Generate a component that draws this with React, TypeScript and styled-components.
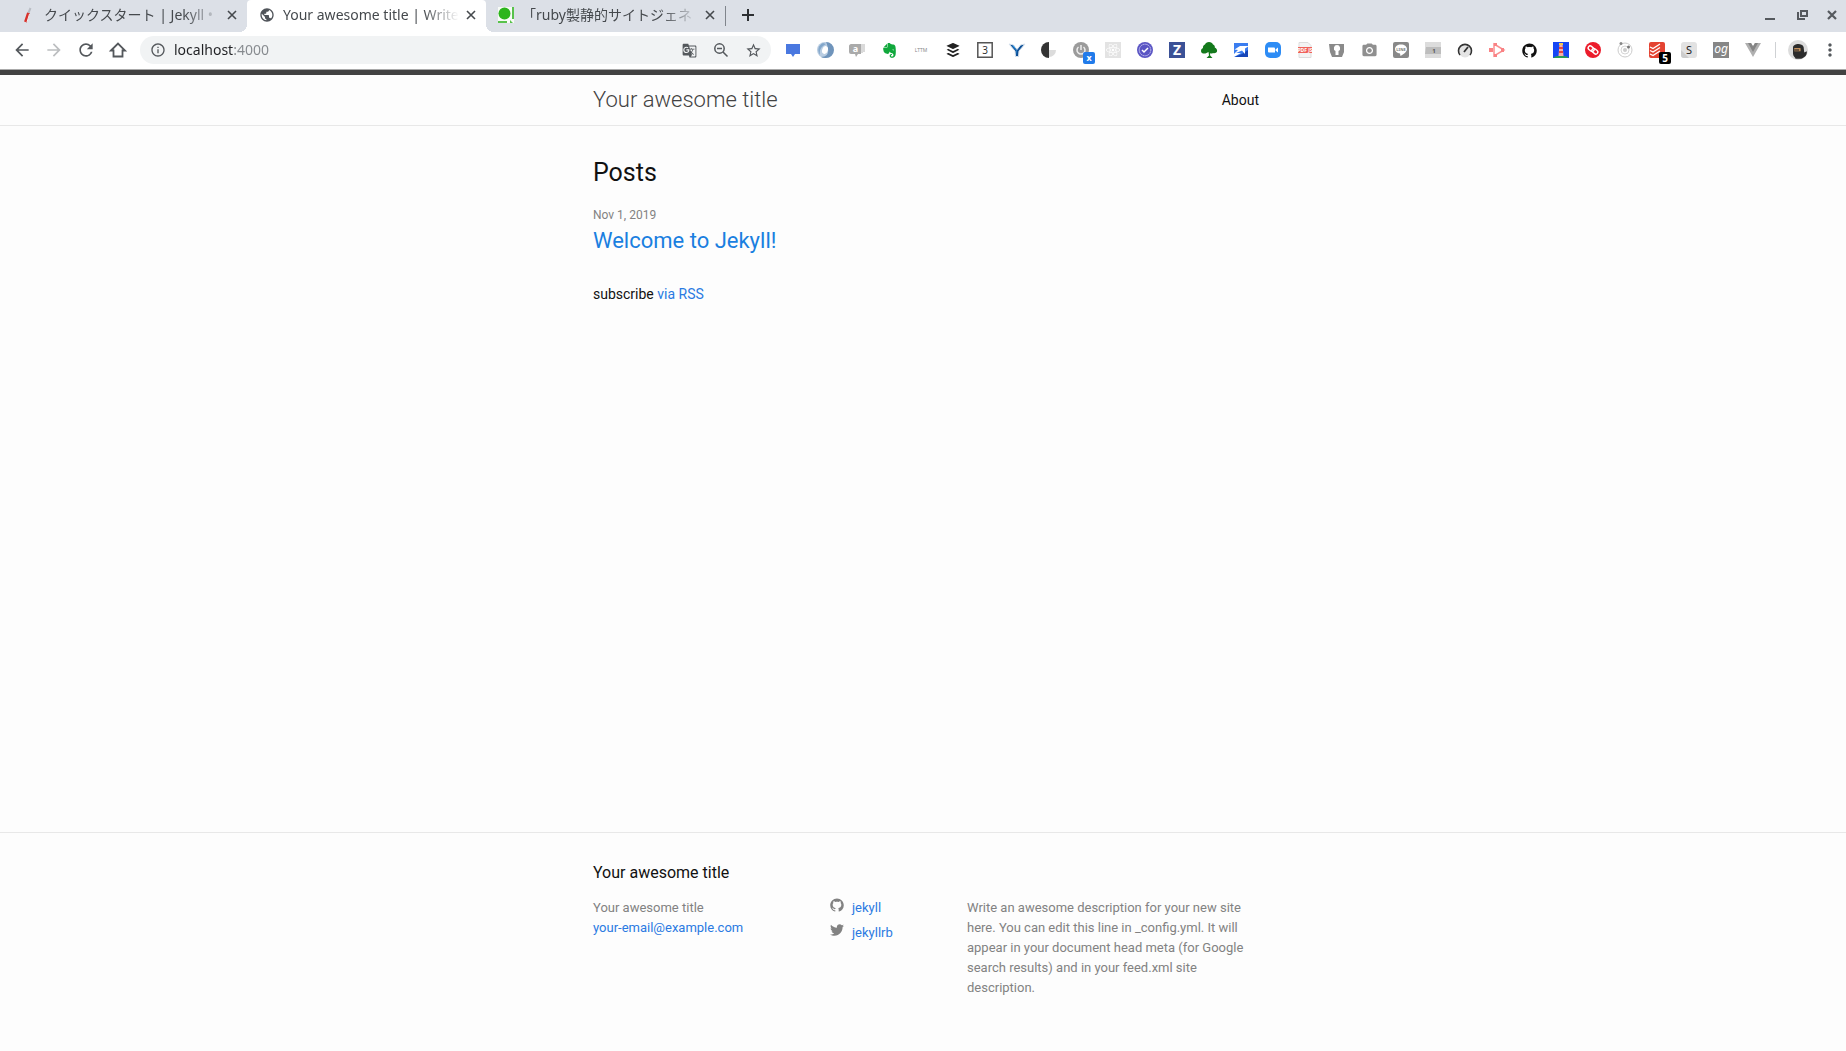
import React from "react";
import styled, { createGlobalStyle, css } from "styled-components";
import { FaBuffer, FaEvernote, FaReact } from "react-icons/fa";
import {
  MdArrowBack,
  MdArrowForward,
  MdCameraAlt,
  MdGTranslate,
  MdInfoOutline,
  MdMoreVert,
  MdPublic,
  MdRefresh,
  MdStarBorder,
} from "react-icons/md";

const GlobalStyle = createGlobalStyle`
  *, *::before, *::after { box-sizing: border-box; }
  body { margin: 0; background: #fdfdfd; }
  button { border: 0; padding: 0; background: none; color: inherit; font: inherit; }
  h1, h2, h3, p, ul { margin: 0; padding: 0; font-weight: 400; }
  ul { list-style: none; }
  svg { display: block; flex: none; }
`;

const uiFont = `"Noto Sans", "Noto Sans CJK JP", sans-serif`;

const Window = styled.div`
  display: flex;
  flex-direction: column;
  min-height: 100vh;
`;

/* ---------- tab strip ---------- */

const TabStrip = styled.div`
  display: flex;
  align-items: center;
  height: 32px;
  padding-left: 8px;
  background: #dce0e7;
  font-family: ${uiFont};
  color: #45494d;
`;

const Tab = styled.div<{ $active?: boolean }>`
  position: relative;
  display: flex;
  flex: 0 1 239px;
  align-items: center;
  min-width: 0;
  height: 32px;
  padding: 0 7px 2px 12px;
  ${(p) =>
    p.$active &&
    css`
      background: #fff;
      border-radius: 4px 4px 0 0;
      &::before,
      &::after {
        content: "";
        position: absolute;
        bottom: 0;
        width: 8px;
        height: 8px;
      }
      &::before {
        left: -8px;
        background: radial-gradient(circle at 0 0, transparent 8px, #fff 8px);
      }
      &::after {
        right: -8px;
        background: radial-gradient(circle at 100% 0, transparent 8px, #fff 8px);
      }
    `}
`;

const TabTitle = styled.button`
  flex: 1;
  min-width: 0;
  margin: 0 4px 0 8px;
  overflow: hidden;
  white-space: nowrap;
  text-align: left;
  font-size: 14px;
  line-height: 20px;
  mask-image: linear-gradient(to left, transparent 0, #000 36px);
`;

const CloseButton = styled.button`
  display: grid;
  place-items: center;
  width: 16px;
  height: 16px;
`;

const TabDivider = styled.span`
  width: 1px;
  height: 20px;
  background: #80858c;
`;

const NewTabButton = styled(CloseButton)`
  width: 28px;
  height: 28px;
  margin: 0 auto 2px 8px;
  color: #2d3033;
`;

const WindowButton = styled(CloseButton)`
  width: 32px;
  height: 30px;
  margin-bottom: 2px;
  color: #55595e;
  &:last-child {
    width: 28px;
  }
`;

/* ---------- toolbar ---------- */

const Toolbar = styled.div`
  display: flex;
  align-items: center;
  height: 38px;
  padding: 0 0 1px 6px;
  border-bottom: 1px solid #aaa;
  background: #fff;
  font-family: ${uiFont};
`;

const ToolButton = styled.button<{ $dim?: boolean }>`
  display: grid;
  flex: none;
  place-items: center;
  width: 32px;
  height: 28px;
  color: ${(p) => (p.$dim ? "#bcbec0" : "#54585c")};
`;

const AddressBar = styled.div`
  display: flex;
  flex: 1;
  align-items: center;
  min-width: 0;
  height: 28px;
  margin: 0 6px;
  padding: 0 2px 0 10px;
  border-radius: 14px;
  background: #f1f3f4;
  color: #54585c;
`;

const AddressInput = styled.input`
  flex: 1;
  min-width: 0;
  margin-left: 8px;
  padding: 0;
  border: 0;
  outline: 0;
  background: linear-gradient(to right, #202124 59px, #85898d 59px);
  background-clip: text;
  -webkit-text-fill-color: transparent;
  font-family: ${uiFont};
  font-size: 14px;
  line-height: 20px;
`;

const Extensions = styled.div`
  display: flex;
`;

const ToolDivider = styled.span`
  width: 1px;
  height: 16px;
  margin: 0 6px;
  background: #cfd1d4;
`;

/* ---------- web page ---------- */

const Page = styled.div`
  display: flex;
  flex: 1;
  flex-direction: column;
  border-top: 5px solid #424242;
  background: #fdfdfd;
  color: #111;
  font-family: Roboto, sans-serif;
  font-size: 14px;
  line-height: 22px;
`;

const Wrapper = styled.div`
  max-width: 728px;
  margin: 0 auto;
  padding: 0 28px 0 34px;
`;

const SiteHeader = styled.header`
  border-bottom: 1px solid #e8e8e8;
`;

const HeaderRow = styled(Wrapper)`
  display: flex;
  align-items: center;
  justify-content: space-between;
  height: 50px;
`;

const SiteTitle = styled.a`
  color: #424242;
  font-size: 22px;
  font-weight: 300;
  text-decoration: none;
`;

const NavLink = styled.a`
  color: #111;
  text-decoration: none;
`;

const Content = styled.main`
  flex: 1;
  padding: 28px 0;
`;

const ListHeading = styled.h2`
  margin-bottom: 13px;
  font-size: 25px;
  line-height: 38px;
`;

const PostItem = styled.li`
  margin-bottom: 26px;
`;

const PostDate = styled.time`
  display: block;
  color: #828282;
  font-size: 12px;
  line-height: 20px;
`;

const PostTitle = styled.h3`
  font-size: 22px;
  line-height: 32px;
`;

const Link = styled.a`
  color: #2a7ae2;
  text-decoration: none;
`;

const PostLink = styled(Link)`
  color: #1a7fe0;
`;

const SiteFooter = styled.footer`
  padding: 28px 0 53px;
  border-top: 1px solid #e8e8e8;
`;

const FooterHeading = styled.h2`
  margin-bottom: 13px;
  font-size: 16px;
  line-height: 24px;
`;

const FooterColumns = styled.div`
  display: grid;
  grid-template-columns: 237fr 137fr 292fr;
  color: #828282;
  font-size: 13px;
  line-height: 20px;
`;

const SocialLink = styled(Link)`
  display: flex;
  gap: 8px;
  height: 25px;
  svg {
    color: #828282;
  }
`;

/* ---------- icons ---------- */

const Icon = ({ size = 16, children }: { size?: number; children: React.ReactNode }) => (
  <svg width={size} height={size} viewBox="0 0 16 16" fill="none" overflow="visible" aria-hidden="true">
    {children}
  </svg>
);

const Cross = ({ size = 16, weight = 2 }: { size?: number; weight?: number }) => (
  <Icon size={size}>
    <path d="M4 4l8 8M12 4l-8 8" stroke="currentColor" strokeWidth={weight} />
  </Icon>
);

const glyph = { fontFamily: "Noto Sans, sans-serif", textAnchor: "middle" as const };

const extensions: { name: string; icon: React.ReactNode }[] = [
  {
    name: "Comments",
    icon: <Icon><path d="M1 2h14v10h-5l-2 3-2-3H1z" fill="#4a78e0" /></Icon>,
  },
  {
    name: "Swirl",
    icon: (
      <Icon>
        <circle cx="8" cy="8" r="8" fill="#b9cde2" />
        <path d="M9 0a8 8 0 0 1 0 16 8 8 0 0 1-5-1c5 0 8-3 7-8-.4-3-1-5-2-7z" fill="#6f94bb" />
        <path d="M6 1C1 3 0 9 3 13c-.5-4 0-8 6-11z" fill="#83a7cb" />
        <ellipse cx="8" cy="8" rx="2.8" ry="4" fill="#fff" transform="rotate(20 8 8)" />
      </Icon>
    ),
  },
  {
    name: "Alias",
    icon: (
      <Icon>
        <path d="M2 2h10v10H9l-2 3-1-3H2a2 2 0 0 1-2-2V4c0-1 1-2 2-2z" fill="#aaa" />
        <path d="M13 2v9M15 2v8" stroke="#b5b5b5" />
        <text x="6.5" y="10" fontSize="9" fontWeight="700" fill="#fff" {...glyph}>a</text>
      </Icon>
    ),
  },
  { name: "Evernote", icon: <FaEvernote size={17} color="#10a83c" /> },
  {
    name: "LTTM",
    icon: <Icon><text x="8" y="9.5" fontSize="5" fill="#888" {...glyph}>LTTM</text></Icon>,
  },
  { name: "Buffer", icon: <FaBuffer size={16} color="#222" /> },
  {
    name: "Counter",
    icon: (
      <Icon>
        <path d="M.8.8h14.400v14.400H.8z" stroke="#555" strokeWidth="1.5" />
        <text x="8" y="11.5" fontSize="10" fill="#333" {...glyph}>3</text>
      </Icon>
    ),
  },
  {
    name: "Y",
    icon: (
      <Icon>
        <path d="M0 2l6 7 .5 5.500h3L10 9l6-7-4.500 1L8 7.500 4.500 3z" fill="#0d4f96" stroke="#d6e2ee" />
        <path d="M3 3.500l4 4.500.7 5V8.500L5 4z" fill="#2f9be8" />
      </Icon>
    ),
  },
  {
    name: "Contrast",
    icon: (
      <Icon>
        <circle cx="8" cy="8" r="7" fill="#dcdcdc" />
        <path d="M8 8h8a8 8 0 0 0-8-8z" fill="#fff" />
        <path d="M8 0a8 8 0 0 0 0 16z" fill="#333" />
      </Icon>
    ),
  },
  {
    name: "Power",
    icon: (
      <Icon>
        <circle cx="8" cy="8" r="8" fill="#9b9b9b" />
        <path d="M5.500 5a4 4 0 1 0 5 0M8 3v5" stroke="#eee" strokeWidth="1.5" />
        <rect x="10" y="10" width="12" height="12" rx="2" fill="#217bea" />
        <text x="16" y="19" fontSize="9" fontWeight="700" fill="#fff" {...glyph}>x</text>
      </Icon>
    ),
  },
  {
    name: "React",
    icon: (
      <Icon>
        <path d="M0 0h16v16H0z" fill="#e3e3e3" />
        <FaReact x="1" y="1" size={14} color="#fff" />
      </Icon>
    ),
  },
  {
    name: "Check",
    icon: (
      <Icon>
        <circle cx="8" cy="8" r="8" fill="#5a55c4" />
        <circle cx="8" cy="8" r="5.8" stroke="#c9c6f2" strokeDasharray="1.5 .5" />
        <path d="M5 8l2 2 4-4" stroke="#fff" strokeWidth="1.5" />
      </Icon>
    ),
  },
  {
    name: "Z",
    icon: (
      <Icon>
        <path d="M0 0h16v16H0z" fill="#3b5196" />
        <text x="8" y="13" fontSize="14" fontWeight="700" fill="#fff" {...glyph}>Z</text>
      </Icon>
    ),
  },
  {
    name: "Tree",
    icon: (
      <Icon>
        <path
          d="M8 0c2 0 3.500 1 4 2.500 1.500.5 2 1.500 1.800 3C15.500 6 16.500 8 16 9.500c-.5 1.500-2.500 2-4 1.500-1 .8-2.500.6-3 .2l.2 2.300L11.500 16h-6L8 13.500 7.500 10 5.500 11C4 12 0 12 0 9c0-1.800 1-2.500 2-3-.3-1.500.5-3 2-3.500C4.500 1 6 0 8 0z"
          fill="#14791c"
        />
      </Icon>
    ),
  },
  {
    name: "Blue arrow",
    icon: (
      <Icon>
        <path d="M1 1h14v14H1z" fill="#3a7df0" />
        <path d="M15 8v7H1l8-3z" fill="#1746b8" />
        <path d="M1.500 7.500L7 4h9l-4 2.500V12L9 8.500 3 11h5L1 15V12l4-4z" fill="#fff" />
      </Icon>
    ),
  },
  {
    name: "Zoom",
    icon: (
      <Icon>
        <rect width="16" height="16" rx="5" fill="#2d8cf5" />
        <path d="M3 5.500h6a1 1 0 0 1 1 1v4H4a1 1 0 0 1-1-1zM10.500 7.500l2.500-2v5l-2.500-2z" fill="#fff" />
      </Icon>
    ),
  },
  {
    name: "PDF JS",
    icon: (
      <Icon>
        <path d="M2 .5h9l3 3v12H2z" fill="#f4f4f4" stroke="#ddd" />
        <path d="M1 5h14v6H1z" fill="#f0625a" />
        <text x="8" y="10" fontSize="5" fontWeight="700" fill="#fff" {...glyph}>PDF JS</text>
      </Icon>
    ),
  },
  {
    name: "Keyhole",
    icon: (
      <Icon>
        <path d="M0 2h15v8l-2 5H3l-2-5z" fill="#8a8a8a" />
        <path d="M8 3a3.200 3.200 0 0 0-1.500 6v4h3V9A3.200 3.200 0 0 0 8 3z" fill="#fff" />
      </Icon>
    ),
  },
  { name: "Camera", icon: <MdCameraAlt size={17} color="#8f8f8f" /> },
  {
    name: "LINE",
    icon: (
      <Icon>
        <rect width="16" height="16" rx="2" fill="#888" />
        <path d="M8 2.500c-3.500 0-6 2-6 4.600 0 2.400 2 4 5 4.400l.5 2.500c3-1.500 6.500-4 6.500-6.900 0-2.600-2.500-4.600-6-4.600z" fill="#fff" />
        <text x="8" y="8.5" fontSize="4" fontWeight="700" fill="#777" {...glyph}>LINE</text>
      </Icon>
    ),
  },
  {
    name: "Tag",
    icon: (
      <Icon>
        <path d="M0 0h16v16H0z" fill="#dcdcdc" />
        <path d="M1 5h15v7H0z" fill="#bdbdbd" />
        <text x="9" y="10.5" fontSize="6" fontWeight="700" fill="#555" {...glyph}>1</text>
      </Icon>
    ),
  },
  {
    name: "Speed",
    icon: (
      <Icon>
        <circle cx="8" cy="9" r="6.5" fill="#e4e4e4" />
        <path d="M3 13a6.500 6.500 0 1 1 10 0" stroke="#333" strokeWidth="1.6" />
        <path d="M7 10l4-5" stroke="#333" strokeWidth="1.8" />
      </Icon>
    ),
  },
  {
    name: "Play",
    icon: (
      <Icon>
        <path d="M5 2l10 6-10 6V8z" stroke="#fa8f90" strokeWidth="1.5" />
        <path d="M0 6h4v4H0zM5 1h3v3H5zM5 12h3v3H5zM12 6h3v4h-3z" fill="#f98284" />
      </Icon>
    ),
  },
  { name: "GitHub", icon: <GithubMark size={15} color="#111" /> },
  {
    name: "Lighthouse",
    icon: (
      <Icon>
        <path d="M0 0h16v16H0z" fill="#1646f5" />
        <path d="M0 16c3-3 13-3 16 0z" fill="#2a9b55" />
        <path d="M6.500 2h3l1 12h-5z" fill="#f6b0a8" />
        <path d="M6 5h4v2H6zM6 9h4v2H6z" fill="#e8453c" />
        <path d="M6 1h4v2H6z" fill="#f5c84b" />
      </Icon>
    ),
  },
  {
    name: "Authy",
    icon: (
      <Icon>
        <circle cx="8" cy="8" r="8" fill="#ec1c2b" />
        <g transform="rotate(40 8 8)" stroke="#fff" strokeWidth="1.4">
          <rect x="2.5" y="6.2" width="6.5" height="4" rx="2" />
          <rect x="7" y="5.8" width="6.5" height="4" rx="2" />
        </g>
      </Icon>
    ),
  },
  {
    name: "Orbit",
    icon: (
      <Icon>
        <circle cx="8" cy="8" r="7" stroke="#ccc" />
        <circle cx="8" cy="8" r="4" stroke="#d5d5d5" />
        <circle cx="8" cy="8" r="2" fill="#ccc" />
        <circle cx="4" cy="1.5" r="1.5" fill="#888" />
        <circle cx="11.5" cy="5" r="1.5" fill="#777" />
      </Icon>
    ),
  },
  {
    name: "Todoist",
    icon: (
      <Icon>
        <rect width="16" height="16" rx="2" fill="#e44332" />
        <path d="M1 5l3 1.500L11 2M1 8.500L4 10l7-4.500M1 12l3 1.500L11 9" stroke="#fff" strokeWidth="1.3" />
        <rect x="10" y="10" width="12" height="12" rx="2" fill="#000" />
        <text x="16" y="19.5" fontSize="10" fontWeight="700" fill="#fff" {...glyph}>5</text>
      </Icon>
    ),
  },
  {
    name: "S",
    icon: (
      <Icon>
        <rect width="16" height="16" rx="3" fill="#e2e2e2" />
        <path d="M0 8l8 8H3a3 3 0 0 1-3-3z" fill="#ccc" />
        <text x="8" y="12" fontSize="11" fill="#222" {...glyph}>S</text>
      </Icon>
    ),
  },
  {
    name: "Open Graph",
    icon: (
      <Icon>
        <path d="M0 0h16v16H0z" fill="#868686" />
        <text x="8" y="11" fontSize="12" fontStyle="italic" fill="#fff" {...glyph}>og</text>
      </Icon>
    ),
  },
  {
    name: "Vue",
    icon: (
      <Icon>
        <path d="M0 1h6l2 3 2-3h6L8 15z" fill="#b0b0b0" />
        <path d="M3 1h3l2 3.500L10 1h3L8 10z" fill="#858585" />
      </Icon>
    ),
  },
];

function GithubMark({ size = 16, color = "currentColor" }: { size?: number; color?: string }) {
  return (
    <Icon size={size}>
      <path
        fill={color}
        d="M7.999.431c-4.285 0-7.760 3.474-7.760 7.761 0 3.428 2.223 6.337 5.307 7.363.388.071.530-.168.530-.374 0-.184-.007-.672-.010-1.320-2.159.469-2.614-1.040-2.614-1.040-.353-.896-.862-1.135-.862-1.135-.705-.481.053-.472.053-.472.779.055 1.189.8 1.189.8.692 1.186 1.816.843 2.258.645.071-.502.271-.843.493-1.037C4.860 11.425 3.049 10.760 3.049 7.786c0-.847.302-1.540.799-2.082C3.768 5.507 3.501 4.718 3.924 3.650c0 0 .652-.209 2.134.796C6.677 4.273 7.340 4.187 8 4.184c.659.003 1.323.089 1.943.261 1.482-1.004 2.132-.796 2.132-.796.423 1.068.157 1.857.077 2.054.497.542.798 1.235.798 2.082 0 2.981-1.814 3.637-3.543 3.829.279.240.527.713.527 1.437 0 1.037-.010 1.874-.010 2.129 0 .208.140.449.534.373 3.081-1.028 5.302-3.935 5.302-7.362C15.760 3.906 12.285.431 7.999.431z"
      />
    </Icon>
  );
}

const TwitterBird = () => (
  <Icon size={14}>
    <path
      fill="currentColor"
      d="M15.969,3.058c-0.586,0.26-1.217,0.436-1.878,0.515c0.675-0.405,1.194-1.045,1.438-1.809c-0.632,0.375-1.332,0.647-2.076,0.793c-0.596-0.636-1.446-1.033-2.387-1.033c-1.806,0-3.27,1.464-3.27,3.27c0,0.256,0.029,0.506,0.085,0.745C5.163,5.404,2.753,4.102,1.14,2.124C0.859,2.607,0.698,3.168,0.698,3.767c0,1.134,0.577,2.135,1.455,2.722C1.616,6.472,1.112,6.325,0.671,6.08c0,0.014,0,0.027,0,0.041c0,1.584,1.127,2.906,2.623,3.206C3.02,9.402,2.731,9.442,2.433,9.442c-0.211,0-0.416-0.021-0.615-0.059c0.416,1.299,1.624,2.245,3.055,2.271c-1.119,0.877-2.529,1.4-4.061,1.4c-0.264,0-0.524-0.015-0.78-0.046c1.447,0.928,3.166,1.469,5.013,1.469c6.015,0,9.304-4.983,9.304-9.304c0-0.142-0.003-0.283-0.009-0.423C14.976,4.29,15.531,3.714,15.969,3.058z"
    />
  </Icon>
);

const tabs = [
  {
    title: "クイックスタート | Jekyll •",
    icon: (
      <Icon>
        <path d="M10.500 1L8 7" stroke="#b9bdc4" strokeWidth="2" />
        <path d="M8.500 6L5.500 15" stroke="#d8302b" strokeWidth="3" />
        <path d="M9.500 7L7 15" stroke="#f2f2f2" />
      </Icon>
    ),
  },
  { title: "Your awesome title | Write", active: true, icon: <MdPublic size={16} color="#50545a" /> },
  {
    title: "「ruby製静的サイトジェネ",
    icon: (
      <Icon>
        <path d="M0 0h16v16H0z" fill="#f7fbf6" />
        <circle cx="6.5" cy="6.5" r="6" fill="#2cb51c" />
        <path d="M14 0h2v12h-2zM0 14h9v2H0zM12 13l3 3h-3z" fill="#58c24b" />
      </Icon>
    ),
  },
];

export default function App() {
  return (
    <Window>
      <GlobalStyle />
      <TabStrip>
        {tabs.map((tab) => (
          <Tab key={tab.title} $active={tab.active}>
            {tab.icon}
            <TabTitle>{tab.title}</TabTitle>
            <CloseButton aria-label="Close tab">
              <Cross weight={1.6} />
            </CloseButton>
          </Tab>
        ))}
        <TabDivider />
        <NewTabButton aria-label="New tab">
          <Icon>
            <path d="M8 2v12M2 8h12" stroke="currentColor" strokeWidth="2" />
          </Icon>
        </NewTabButton>
        <WindowButton aria-label="Minimize">
          <Icon><path d="M3 12h10" stroke="currentColor" strokeWidth="2" /></Icon>
        </WindowButton>
        <WindowButton aria-label="Restore">
          <Icon>
            <path d="M7 4h6v5H7z" stroke="currentColor" strokeWidth="2" />
            <path d="M4 5v7h7" stroke="currentColor" strokeWidth="2" />
          </Icon>
        </WindowButton>
        <WindowButton aria-label="Close window">
          <Cross weight={2.2} />
        </WindowButton>
      </TabStrip>

      <Toolbar>
        <ToolButton aria-label="Back"><MdArrowBack size={20} /></ToolButton>
        <ToolButton aria-label="Forward" $dim><MdArrowForward size={20} /></ToolButton>
        <ToolButton aria-label="Reload"><MdRefresh size={20} /></ToolButton>
        <ToolButton aria-label="Home">
          <Icon>
            <path d="M1 8.500L8 1.500l7 7h-2.500v6h-9v-6z" stroke="currentColor" strokeWidth="1.8" />
          </Icon>
        </ToolButton>
        <AddressBar>
          <MdInfoOutline size={16} />
          <AddressInput aria-label="Address" defaultValue="localhost:4000" />
          <ToolButton aria-label="Translate"><MdGTranslate size={15} /></ToolButton>
          <ToolButton aria-label="Zoom out">
            <Icon>
              <circle cx="6.5" cy="6.5" r="4.7" stroke="currentColor" strokeWidth="1.5" />
              <path d="M4 6.500h5M10 10l4.500 4.500" stroke="currentColor" strokeWidth="1.5" />
            </Icon>
          </ToolButton>
          <ToolButton aria-label="Bookmark"><MdStarBorder size={17} /></ToolButton>
        </AddressBar>
        <Extensions>
          {extensions.map((ext) => (
            <ToolButton key={ext.name} aria-label={ext.name}>{ext.icon}</ToolButton>
          ))}
        </Extensions>
        <ToolDivider />
        <ToolButton aria-label="Profile">
          <Icon size={20}>
            <circle cx="8" cy="8" r="8" fill="#dcdcdc" />
            <path d="M4 6c0-3 7-4 8.500-.5L13 10l2-1c.5 3-1.500 5-4.500 6H6c0-1-2-2-2-4z" fill="#2c2c2c" />
            <path d="M5 6.500h5V9H5z" fill="#d9a066" />
            <path d="M5 7.500h4v1H5z" fill="#222" />
          </Icon>
        </ToolButton>
        <ToolButton aria-label="Menu"><MdMoreVert size={20} /></ToolButton>
      </Toolbar>

      <Page>
        <SiteHeader>
          <HeaderRow>
            <SiteTitle href="#">Your awesome title</SiteTitle>
            <nav><NavLink href="#about">About</NavLink></nav>
          </HeaderRow>
        </SiteHeader>

        <Content>
          <Wrapper>
            <ListHeading>Posts</ListHeading>
            <ul>
              <PostItem>
                <PostDate dateTime="2019-11-01">Nov 1, 2019</PostDate>
                <PostTitle><PostLink href="#welcome">Welcome to Jekyll!</PostLink></PostTitle>
              </PostItem>
            </ul>
            <p>subscribe <Link href="#feed">via RSS</Link></p>
          </Wrapper>
        </Content>

        <SiteFooter>
          <Wrapper>
            <FooterHeading>Your awesome title</FooterHeading>
            <FooterColumns>
              <ul>
                <li>Your awesome title</li>
                <li><Link href="mailto:your-email@example.com">your-email@example.com</Link></li>
              </ul>
              <ul>
                <li><SocialLink href="#github"><GithubMark size={14} />jekyll</SocialLink></li>
                <li><SocialLink href="#twitter"><TwitterBird />jekyllrb</SocialLink></li>
              </ul>
              <p>
                Write an awesome description for your new site here. You can edit this line in _config.yml. It will
                appear in your document head meta (for Google search results) and in your feed.xml site description.
              </p>
            </FooterColumns>
          </Wrapper>
        </SiteFooter>
      </Page>
    </Window>
  );
}
